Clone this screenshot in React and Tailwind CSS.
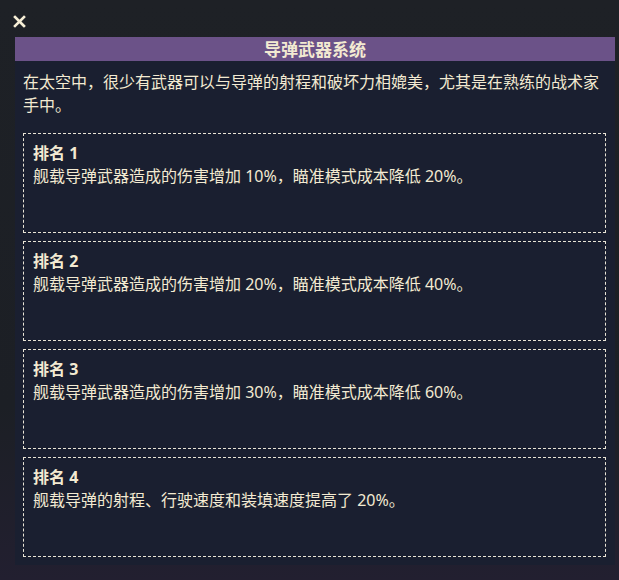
const ranks = [
  { rank: 1, text: "舰载导弹武器造成的伤害增加 10%，瞄准模式成本降低 20%。" },
  { rank: 2, text: "舰载导弹武器造成的伤害增加 20%，瞄准模式成本降低 40%。" },
  { rank: 3, text: "舰载导弹武器造成的伤害增加 30%，瞄准模式成本降低 60%。" },
  { rank: 4, text: "舰载导弹的射程、行驶速度和装填速度提高了 20%。" },
];

const font = { fontFamily: '"Noto Sans", "Noto Sans CJK SC", sans-serif' };

export default function App() {
  return (
    <div
      className="w-[619px] h-[580px] overflow-hidden bg-[#1d2025] bg-[linear-gradient(180deg,#1e2126_0%,#1c1f25_70%,#221f30_100%)] text-[#f3ead2]"
      style={font}
    >
      <div className="h-[37px] pl-[13px] pt-[15px]">
        {/* close */}
        <svg width="13" height="13" viewBox="0 0 13 13" className="block">
          <path d="M2 2 L11 11 M11 2 L2 11" stroke="#f6eed6" strokeWidth="2.6" strokeLinecap="square" />
        </svg>
      </div>

      <div className="ml-[15px] w-[600px] bg-[#1a1f30]">
        <div className="h-[24px] bg-[#6b5288] flex items-center justify-center">
          <span className="text-[17px] font-bold leading-none">导弹武器系统</span>
        </div>

        <div className="px-[8px] pt-[10px] pb-[8px]">
          <p className="text-[16px] leading-[23px] pr-[8px]">
            在太空中，很少有武器可以与导弹的射程和破坏力相媲美，尤其是在熟练的战术家手中。
          </p>

          <div className="mt-[16px] flex flex-col gap-[8px] pr-[1px]">
            {ranks.map((r) => (
              <div
                key={r.rank}
                className="h-[100px] border border-dashed border-[#e9e4d6] px-[9px] pt-[8px]"
              >
                <p className="text-[16px] font-bold leading-[22px]">排名 {r.rank}</p>
                <p className="text-[16px] leading-[24px]">{r.text}</p>
              </div>
            ))}
          </div>
        </div>
      </div>
    </div>
  );
}
